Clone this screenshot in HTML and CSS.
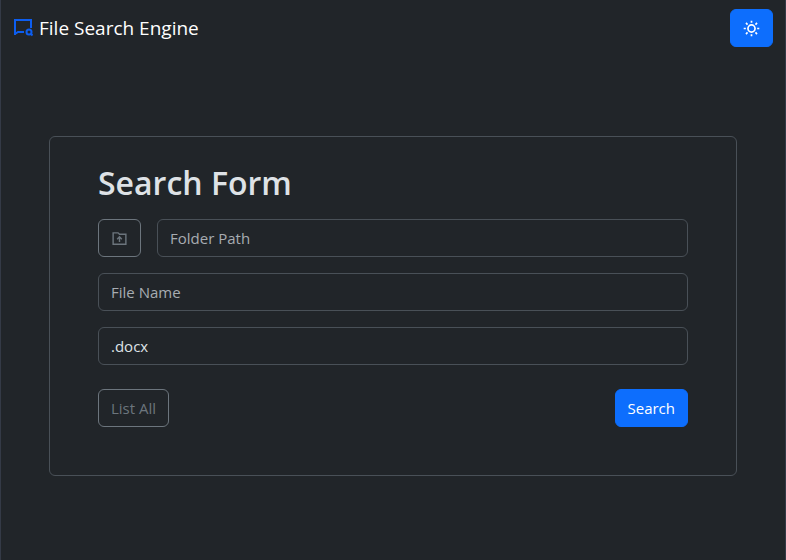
FILE: index.html
```html
<!DOCTYPE html>
<html lang="en">
<head>
  <meta charset="utf-8">
  <meta name="viewport" content="width=device-width, initial-scale=1">
  <title>File Search Engine</title>
  <link rel="stylesheet" href="styles.css">
</head>
<body>
  <header class="navbar">
    <a class="brand" href="#">
      <svg class="brand-icon" viewBox="0 0 20 20" fill="none" stroke="currentColor" stroke-width="2" aria-hidden="true">
        <path d="M2 17V2H18V10M2 16L5 14H11"/>
        <circle cx="16" cy="14" r="2.500"/>
        <path d="M17.500 15.500L19.500 17.500"/>
      </svg>
      <span>File Search Engine</span>
    </a>
    <button class="btn btn-primary" type="button" aria-label="Toggle theme">
      <svg class="btn-icon" viewBox="0 0 24 24" fill="none" stroke="currentColor" stroke-width="2.400" aria-hidden="true">
        <circle cx="12" cy="12" r="5"/>
        <path d="M12 1V4M12 20V23M1 12H4M20 12H23M4.200 4.200L6.400 6.400M17.600 17.600L19.800 19.800M19.800 4.200L17.600 6.400M6.400 17.600L4.200 19.800"/>
      </svg>
    </button>
  </header>
  <main class="content">
    <form class="card">
      <h1 class="card-title">Search Form</h1>
      <div class="folder-row">
        <button class="btn btn-outline" type="button" aria-label="Choose folder">
          <svg class="btn-icon" viewBox="0 0 24 24" fill="none" stroke="currentColor" stroke-width="2" aria-hidden="true">
            <path d="M3 4H10L12 6H21V20H3ZM12 17V10M8.700 13L12 9.700L15.300 13"/>
          </svg>
        </button>
        <input class="field" type="text" placeholder="Folder Path" aria-label="Folder Path">
      </div>
      <input class="field" type="text" placeholder="File Name" aria-label="File Name">
      <input class="field" type="text" value=".docx" aria-label="File extension">
      <div class="actions">
        <button class="btn btn-outline" type="button">List All</button>
        <button class="btn btn-primary" type="submit">Search</button>
      </div>
    </form>
  </main>
</body>
</html>
```
FILE: styles.css
```css
* {
  box-sizing: border-box;
}

body {
  margin: 0;
  min-height: 100vh;
  border: solid #343a46;
  border-width: 0 1px;
  background: #212529;
  color: #dee2e6;
  font: 15px/24px "Open Sans", "Noto Sans", sans-serif;
}

.navbar {
  display: flex;
  align-items: center;
  justify-content: space-between;
  padding: 9px 12px;
}

.brand {
  display: flex;
  align-items: center;
  gap: 6px;
  color: #fff;
  font-size: 19px;
  text-decoration: none;
}

.brand-icon {
  width: 20px;
  height: 20px;
  color: #0d5ef0;
}

.btn {
  display: inline-flex;
  align-items: center;
  justify-content: center;
  height: 38px;
  padding: 0 12px;
  border: 1px solid;
  border-radius: 6px;
  font: inherit;
  cursor: pointer;
}

.btn-primary {
  border-color: #0d6efd;
  background: #0d6efd;
  color: #fff;
}

.btn-outline {
  border-color: #6c757d;
  background: transparent;
  color: #6c757d;
}

.btn-icon {
  width: 17px;
  height: 17px;
}

.content {
  padding: 80px 48px 48px;
}

.card {
  display: flex;
  flex-direction: column;
  gap: 16px;
  padding: 26px 48px 48px;
  border: 1px solid #495057;
  border-radius: 6px;
}

.card-title {
  margin: 0;
  font-size: 32px;
  font-weight: 600;
  line-height: 40px;
}

.folder-row {
  display: flex;
  gap: 16px;
}

.field {
  flex: 1 1 auto;
  width: 100%;
  min-width: 0;
  height: 38px;
  padding: 0 12px;
  border: 1px solid #495057;
  border-radius: 6px;
  background: transparent;
  color: #dee2e6;
  font: inherit;
}

.field::placeholder {
  color: #a7acb1;
  opacity: 1;
}

.actions {
  display: flex;
  justify-content: space-between;
  padding-top: 8px;
}
```
